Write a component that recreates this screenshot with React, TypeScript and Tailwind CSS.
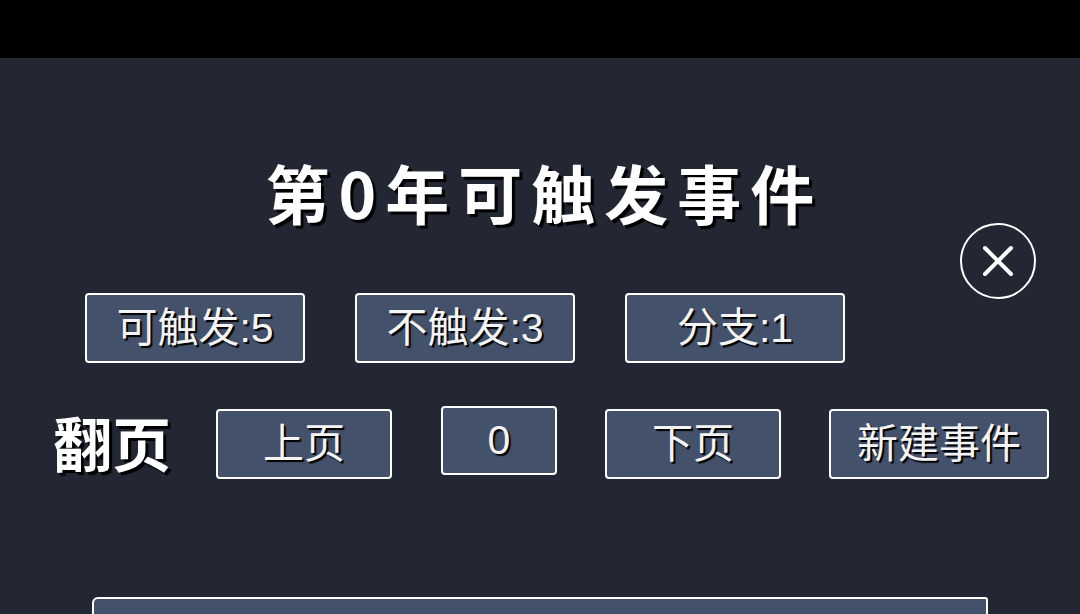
import React from "react";

const FONT = "font-['Liberation_Sans','Noto_Sans_CJK_SC',sans-serif]";
const SHADOW = "[text-shadow:2px_2px_1px_#000]";

function PanelButton({
  label,
  className,
}: {
  label: string;
  className: string;
}) {
  return (
    <div
      className={`flex items-center justify-center rounded-[4px] border-2 border-white bg-[#44516a] text-[41px] leading-none text-[#f4f4f4] ${SHADOW} ${className}`}
    >
      {label}
    </div>
  );
}

function CloseButton() {
  return (
    <div className="absolute left-[960px] top-[165px] flex h-[76px] w-[76px] items-center justify-center rounded-full border-2 border-white">
      <svg width="34" height="34" viewBox="0 0 34 34" fill="none">
        <path
          d="M4 4 L30 30 M30 4 L4 30"
          stroke="white"
          strokeWidth="4"
          strokeLinecap="round"
        />
      </svg>
    </div>
  );
}

export default function App() {
  return (
    <div className={`flex h-[614px] w-[1080px] flex-col overflow-hidden bg-black ${FONT}`}>
      <div className="h-[58px] shrink-0 bg-black" />
      <div className="relative flex flex-1 flex-col bg-[#232733]">
        <h1
          className={`mt-[91px] pl-[9px] text-center text-[64px] font-bold leading-[84px] tracking-[9px] text-white [text-shadow:3px_3px_1px_#000] font-['Noto_Sans_CJK_SC',sans-serif]`}
        >
          第0年可触发事件
        </h1>
        <CloseButton />

        <div className="mt-[60px] flex gap-[50px] pl-[85px]">
          <PanelButton label="可触发:5" className="h-[70px] w-[220px]" />
          <PanelButton label="不触发:3" className="h-[70px] w-[220px]" />
          <PanelButton label="分支:1" className="h-[70px] w-[220px]" />
        </div>

        <div className="mt-[46px] flex items-start pl-[53px]">
          <div
            className={`mt-[1px] w-[163px] text-[59px] font-bold leading-[64px] text-white [text-shadow:3px_3px_1px_#000] font-['Noto_Sans_CJK_SC',sans-serif]`}
          >
            翻页
          </div>
          <PanelButton label="上页" className="h-[70px] w-[176px]" />
          <PanelButton label="0" className="ml-[49px] -mt-[3px] h-[69px] w-[116px]" />
          <PanelButton label="下页" className="ml-[48px] h-[70px] w-[176px]" />
          <PanelButton label="新建事件" className="ml-[48px] h-[70px] w-[220px]" />
        </div>

        <div className="ml-[92px] mt-[118px] h-[60px] w-[896px] shrink-0 rounded-tl-[6px] rounded-tr-[3px] border-2 border-white bg-[#44516a]" />
      </div>
    </div>
  );
}
